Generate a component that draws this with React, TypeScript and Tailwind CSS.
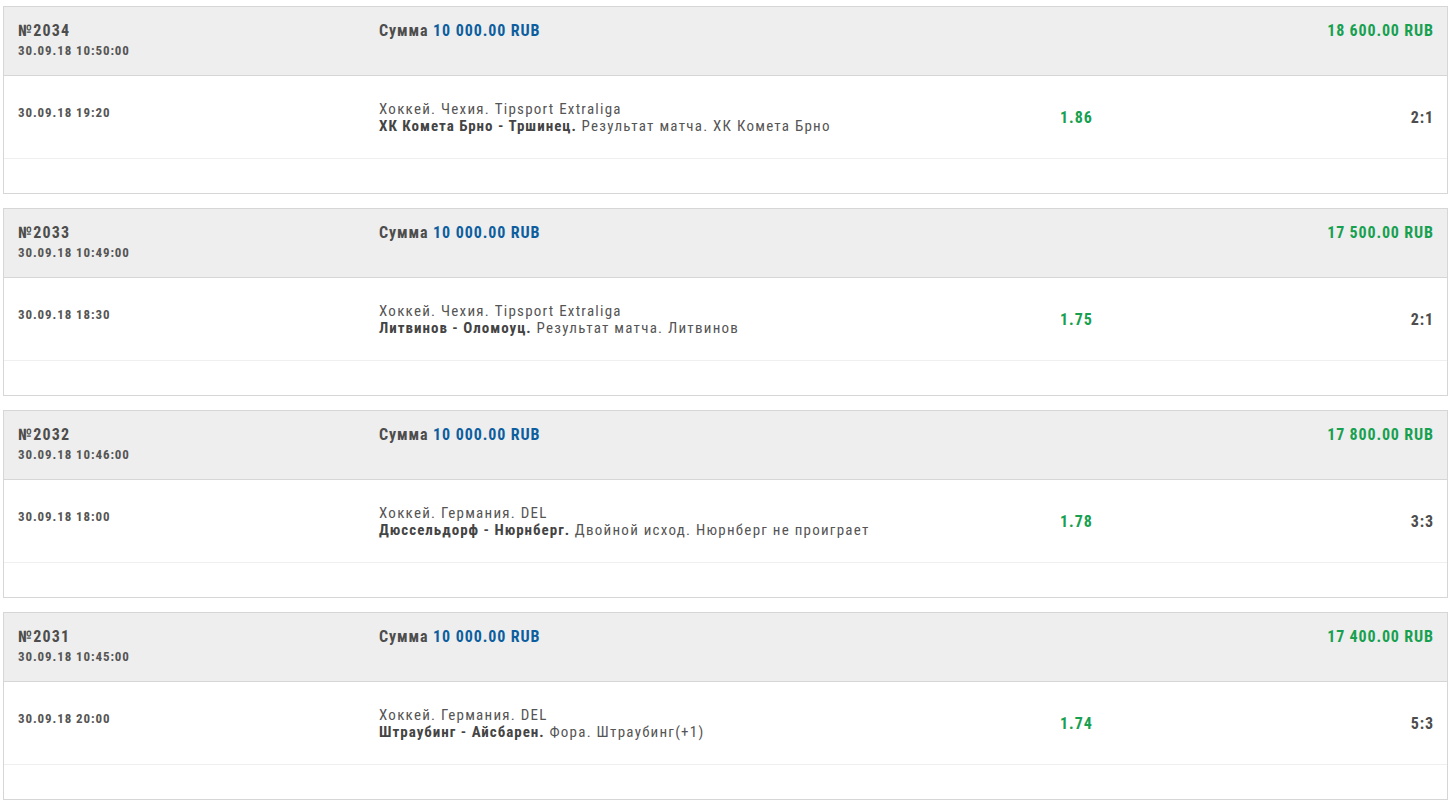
const font = { fontFamily: '"Roboto Condensed", "Liberation Sans Narrow", "DejaVu Sans Condensed", Roboto, sans-serif' };

type Bet = {
  id: number;
  placed: string;
  amount: string;
  payout: string;
  start: string;
  league: string;
  teams: string;
  outcome: string;
  coef: string;
  score: string;
};

const bets: Bet[] = [
  {
    id: 2034,
    placed: "30.09.18 10:50:00",
    amount: "10 000.00 RUB",
    payout: "18 600.00 RUB",
    start: "30.09.18 19:20",
    league: "Хоккей. Чехия. Tipsport Extraliga",
    teams: "ХК Комета Брно - Тршинец.",
    outcome: "Результат матча. ХК Комета Брно",
    coef: "1.86",
    score: "2:1",
  },
  {
    id: 2033,
    placed: "30.09.18 10:49:00",
    amount: "10 000.00 RUB",
    payout: "17 500.00 RUB",
    start: "30.09.18 18:30",
    league: "Хоккей. Чехия. Tipsport Extraliga",
    teams: "Литвинов - Оломоуц.",
    outcome: "Результат матча. Литвинов",
    coef: "1.75",
    score: "2:1",
  },
  {
    id: 2032,
    placed: "30.09.18 10:46:00",
    amount: "10 000.00 RUB",
    payout: "17 800.00 RUB",
    start: "30.09.18 18:00",
    league: "Хоккей. Германия. DEL",
    teams: "Дюссельдорф - Нюрнберг.",
    outcome: "Двойной исход. Нюрнберг не проиграет",
    coef: "1.78",
    score: "3:3",
  },
  {
    id: 2031,
    placed: "30.09.18 10:45:00",
    amount: "10 000.00 RUB",
    payout: "17 400.00 RUB",
    start: "30.09.18 20:00",
    league: "Хоккей. Германия. DEL",
    teams: "Штраубинг - Айсбарен.",
    outcome: "Фора. Штраубинг(+1)",
    coef: "1.74",
    score: "5:3",
  },
];

function BetCard({ bet }: { bet: Bet }) {
  return (
    <div className="ml-[3px] w-[1445px] border border-[#d6d6d6] bg-white mb-[14px]">
      <div className="flex h-[69px] bg-[#eeeeee] border-b border-[#d6d6d6] pl-[14px] pr-[14px] pt-[14px]">
        <div className="w-[361px]">
          <div className="text-[16px] leading-[20px] font-bold tracking-[1.2px] text-[#4d4d4d]">№{bet.id}</div>
          <div className="text-[13px] leading-[16px] font-bold tracking-[0.9px] text-[#555555] mt-[2px]">{bet.placed}</div>
        </div>
        <div className="flex-1 text-[16px] leading-[20px] font-bold tracking-[0.9px] text-[#4d4d4d]">
          Сумма <span className="text-[#0d5e9e]">{bet.amount}</span>
        </div>
        <div className="text-[16px] leading-[20px] font-bold tracking-[0.85px] mr-[-0.85px] text-[#17a050]">{bet.payout}</div>
      </div>
      <div className="flex items-center h-[83px] border-b border-[#efefef] pl-[14px] pr-[14px] pt-[2px]">
        <div className="w-[361px] pb-[10px] text-[13px] leading-[16px] font-bold tracking-[0.9px] text-[#555555]">{bet.start}</div>
        <div className="w-[681px] text-[15px] leading-[17px] tracking-[1.25px] text-[#555555]">
          <div>{bet.league}</div>
          <div>
            <span className="font-bold tracking-[1px] text-[#444444]">{bet.teams}</span> {bet.outcome}
          </div>
        </div>
        <div className="flex-1 text-[16px] leading-[20px] font-bold tracking-[1px] text-[#17a050]">{bet.coef}</div>
        <div className="text-[16px] leading-[20px] font-bold tracking-[0.9px] mr-[-0.9px] text-[#4d4d4d]">{bet.score}</div>
      </div>
      <div className="h-[34px]" />
    </div>
  );
}

export default function App() {
  return (
    <div className="w-[1452px] min-h-[808px] bg-white pt-[6px]" style={font}>
      {bets.map((b) => (
        <BetCard key={b.id} bet={b} />
      ))}
    </div>
  );
}
